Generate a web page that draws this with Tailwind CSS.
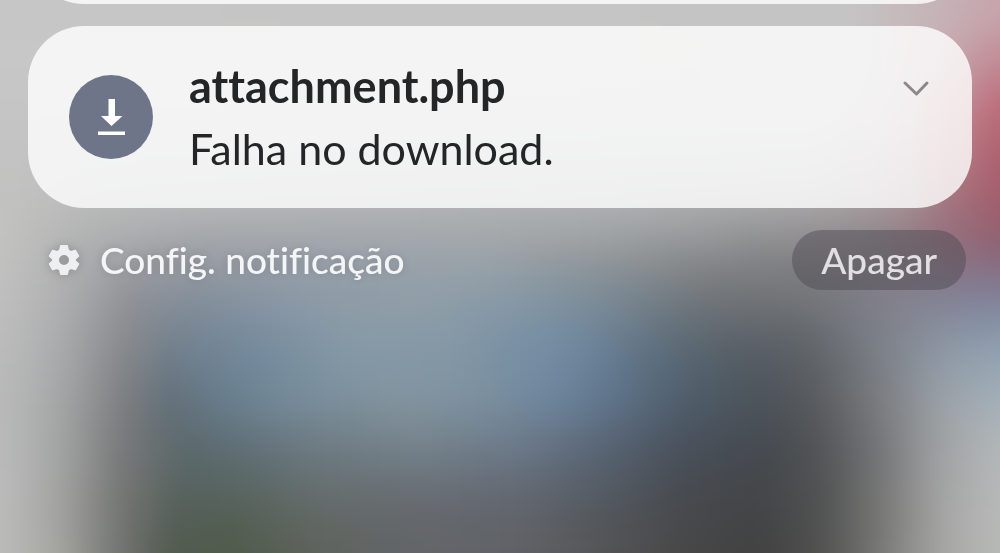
<!DOCTYPE html>
<html lang="pt-BR">
<head>
<meta charset="utf-8">
<meta name="viewport" content="width=device-width, initial-scale=1">
<title>Notificações</title>
<script src="https://cdn.jsdelivr.net/npm/@tailwindcss/browser@4"></script>
</head>
<body class="relative min-h-screen overflow-hidden bg-[#8d9298] font-['Lato','Noto_Sans',sans-serif] [font-variant-ligatures:none]">

<!-- Blurred wallpaper: horizontal colour bands, softened vertically -->
<svg id="wallpaper" class="fixed inset-0 -z-10 h-full w-full" viewBox="0 0 1000 553" preserveAspectRatio="none" aria-hidden="true">
  <defs>
    <filter id="soften" filterUnits="userSpaceOnUse" x="-100" y="-100" width="1200" height="760" color-interpolation-filters="sRGB">
      <feGaussianBlur stdDeviation="12 16"/>
      <feColorMatrix type="saturate" values="0.88"/>
    </filter>
  </defs>
  <g id="bands" filter="url(#soften)"></g>
</svg>

<main class="flex flex-col px-7">
  <div class="-mt-28 h-29 rounded-[56px] bg-white/80"></div>

  <article class="mt-[22px] flex items-center rounded-[56px] bg-white/80 py-8 pr-10 pl-[41px] text-[#242527]">
    <span class="flex size-[84px] shrink-0 items-center justify-center rounded-full bg-[#6e7589]">
      <svg class="size-[84px]" viewBox="0 0 84 84" fill="#fff" aria-hidden="true">
        <path d="M39.500 24h6.500v17h7.500L42.500 51 32 41h7.500zM29 56.500h27v3.500H29z"/>
      </svg>
    </span>
    <div class="ml-9 min-w-0 flex-1">
      <h1 class="truncate text-[45px] leading-[56px] font-bold">attachment.php</h1>
      <p class="mt-2 truncate text-[43px] leading-[54px]">Falha no download.</p>
    </div>
    <button type="button" aria-label="Expandir" class="mt-[10px] self-start p-0">
      <svg class="h-10 w-8" viewBox="0 0 32 40" fill="none" stroke="#8b8889" stroke-width="3" stroke-linecap="round" stroke-linejoin="round" aria-hidden="true">
        <path d="M5 15l11.500 11L27 15"/>
      </svg>
    </button>
  </article>

  <footer class="mt-[22px] flex items-center justify-between pr-[6px] pl-5">
    <a href="#config" class="flex items-center gap-5 text-[37px] leading-[60px] text-[#f4f5f7]">
      <svg class="size-8 shrink-0 drop-shadow-[0_0_5px_rgba(0,0,0,0.2)]" viewBox="0 0 32 32" aria-hidden="true">
        <path fill="#eeeff0" stroke="#eeeff0" stroke-width="2" stroke-linejoin="round" fill-rule="evenodd" d="M13 2h6l1 4.300 3 1.700 4.200-1.300 3 5.200-3.200 3v2.200l3.200 3-3 5.200L23 24l-3 1.700L19 30h-6l-1-4.300L9 24l-4.200 1.300-3-5.200 3.200-3v-2.200l-3.200-3 3-5.200L9 8l3-1.700zM16 10a6 6 0 1 0 0 12 6 6 0 0 0 0-12z"/>
      </svg>
      <span class="font-medium text-shadow-[0_0_8px_rgb(0_0_0/0.15)]">Config. notificação</span>
    </a>
    <button type="button" class="h-[60px] rounded-full bg-[#4a484d]/45 px-[29px] text-[37px] leading-[60px] font-medium text-[#e2dfe4]">Apagar</button>
  </footer>
</main>

<script>
  // Each band: centre y, then "x colour" stops from left to right.
  const bands = [
    [15, '0 c6c6c6,850 c5c4c4,900 c6babd,950 c8b0b5,1000 c9a4ac'],
    [60, '0 c6c7c6,850 c4c4c4,900 c6babd,950 c8a7af,1000 c88793'],
    [110, '0 c5c5c5,840 c4c4c4,900 c5b4b9,950 c78f99,1000 c46574'],
    [160, '0 c2c3c2,150 bfc0c0,820 b8babb,900 b8a2a7,950 b97f8a,1000 b45c6c'],
    [200, '0 c2c2c1,100 b9baba,500 b2b4b6,820 aaa9aa,900 a8979b,945 a97580,1000 a9596b'],
    [230, '0 c3c3c1,80 b3b4b3,200 a8abae,400 a8abb0,600 a3a7aa,750 979899,870 958c8f,940 9c727e,1000 9a5d6e'],
    [262, '0 c2c2c1,80 acadae,150 999ba2,300 969eaa,480 99a2a9,650 8a8e91,750 808184,880 827e84,950 8c7383,1000 8b6880'],
    [300, '0 bfbfbf,60 b0b0b1,130 8f9096,200 808e9c,300 8a9aa9,420 8f9faa,520 8298a8,600 788b99,700 6e7479,800 727479,900 848290,1000 7e83a0'],
    [350, '0 bcbcbc,60 a9abac,120 88898c,170 6f7f8e,250 7089a0,350 8399a8,450 8197a8,560 6f8aa6,600 67809b,660 5a6d7e,740 555d66,800 5a6066,880 7b8088,940 8c98a6,1000 8da2b4'],
    [400, '0 bababa,60 a5a7a7,120 7e7f82,170 606f7a,220 647c8e,280 728a9c,400 8295a2,480 7b91a2,560 6a84a1,620 5b718b,680 4d5f6f,760 4a525a,820 5a5c60,880 7b7d82,940 9aa1a8,1000 a3b0bb'],
    [450, '0 bbbbbb,60 a3a5a4,120 787979,180 5a686b,240 5d6e77,320 6b7a83,420 72818b,520 68788a,600 566475,680 48505b,760 444951,820 515356,880 747577,940 a0a2a3,1000 b4b8ba'],
    [500, '0 bcbcbc,60 a2a3a1,120 757674,180 53605a,240 56635b,320 646c6b,420 666b72,520 61666f,600 535a63,680 474a50,760 434547,820 505151,880 767675,940 a3a4a3,1000 b8bab9'],
    [545, '0 bcbcba,60 a4a4a0,120 727470,170 525b4f,230 4f5b4a,320 5e635c,420 63656a,520 606267,600 545556,680 484848,760 414141,820 505050,880 777775,940 a5a5a3,1000 b8bab8']
  ].map(([y, s]) => ({ y, stops: s.split(',').map(p => { const [x, c] = p.split(' '); return [+x, [0, 2, 4].map(i => parseInt(c.slice(i, i + 2), 16))]; }) }));
  const mix = (a, b, t) => a.map((v, i) => v + (b[i] - v) * t);
  const at = (stops, x) => {
    for (let i = 1; i < stops.length; i++) if (x <= stops[i][0]) {
      const [x0, a] = stops[i - 1], [x1, b] = stops[i];
      return mix(a, b, (x - x0) / (x1 - x0));
    }
    return stops[stops.length - 1][1];
  };
  let out = '';
  for (let y = -60; y < 620; y += 10) {
    const cy = y + 5;
    let i = bands.findIndex(b => b.y >= cy);
    if (i < 0) i = bands.length - 1;
    const lo = bands[Math.max(0, i - 1)], hi = bands[i];
    const t = lo === hi ? 0 : Math.min(1, Math.max(0, (cy - lo.y) / (hi.y - lo.y)));
    for (let x = -60; x < 1060; x += 20) {
      const px = Math.min(1000, Math.max(0, x + 10));
      const c = mix(at(lo.stops, px), at(hi.stops, px), t).map(Math.round);
      out += `<rect x="${x}" y="${y}" width="21" height="11" fill="rgb(${c})"/>`;
    }
  }
  document.getElementById('bands').innerHTML = out;
</script>
</body>
</html>
